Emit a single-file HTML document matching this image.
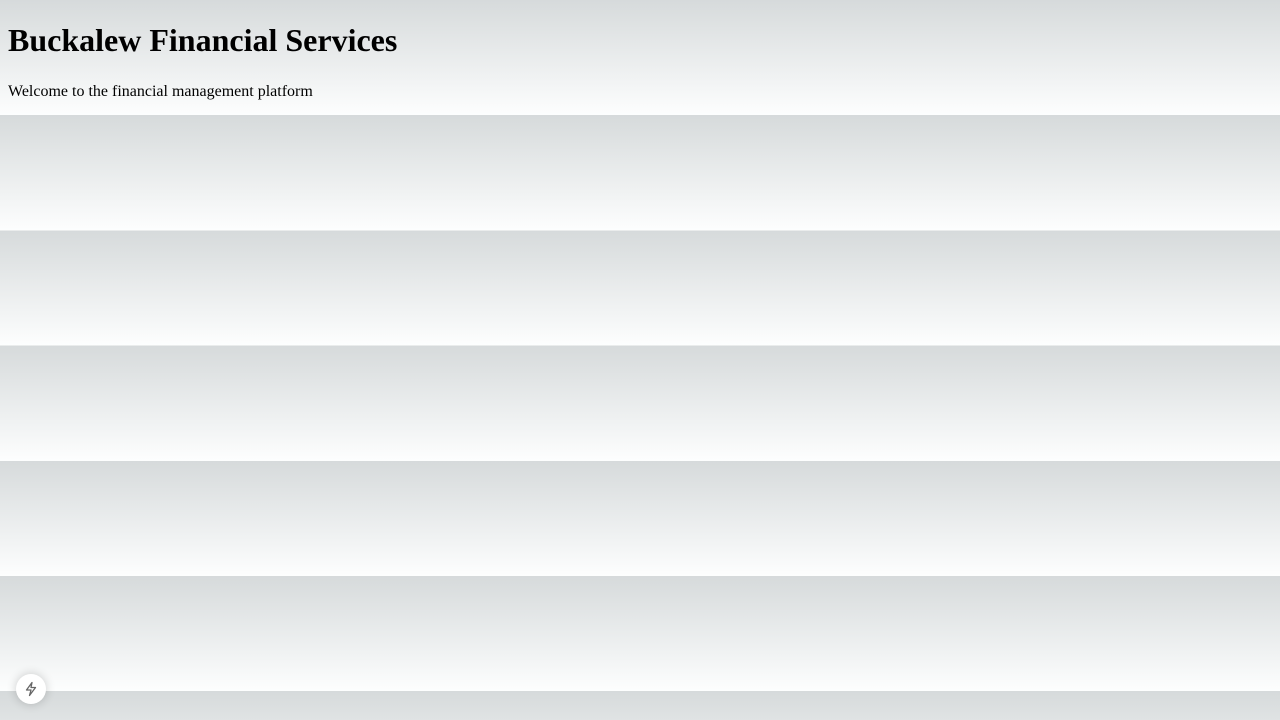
<!DOCTYPE html>
<html><head><meta charset="utf-8"><style>
html,body{margin:0;padding:0}
body{font-family:"Liberation Serif",serif;background:repeating-linear-gradient(to bottom,#d6dadb 0px,#fdfefe 115.2px);min-height:720px;color:#000}
.wrap{padding:0 8px;height:115px;overflow:hidden}
h1{font-size:32px;margin:22px 0 0;line-height:37px;font-weight:bold}
p{font-size:16px;margin:24px 0 0;line-height:18px}
.badge{position:fixed;left:16px;top:674px;width:30px;height:30px;border-radius:50%;background:#fff;box-shadow:0 0 10px rgba(0,0,0,.2);display:flex;align-items:center;justify-content:center}
</style></head><body>
<div class="wrap"><h1>Buckalew Financial Services</h1><p>Welcome to the financial management platform</p></div>
<div class="badge"><svg width="16" height="16" viewBox="0 0 16 16" fill="none" stroke="#666" stroke-width="1.3" stroke-linejoin="round"><path d="M9 1.5L3.5 9H8L6.5 14.5L12.5 6.5H8L9 1.5Z"/></svg></div>
</body></html>
